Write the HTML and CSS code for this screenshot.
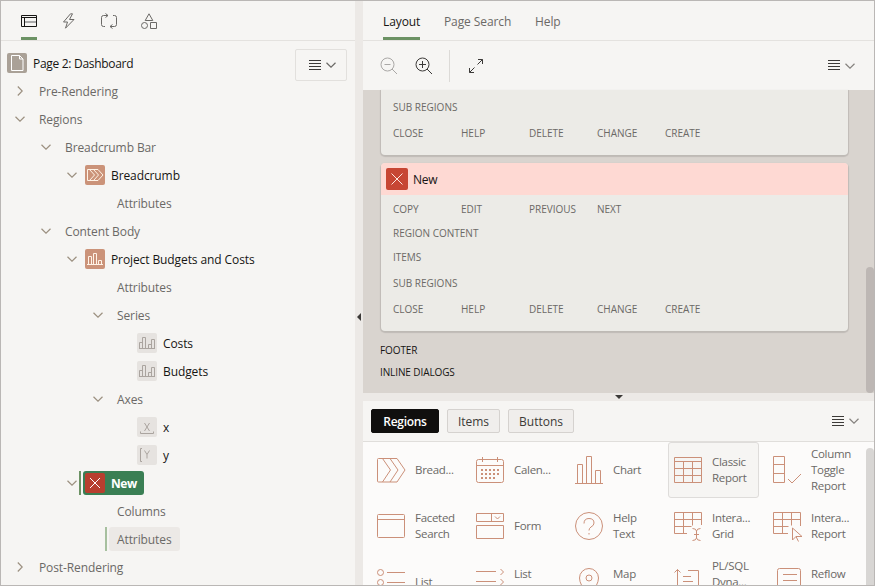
FILE: index.html
```
<!DOCTYPE html>
<html lang="en">

<head>
  <meta charset="UTF-8" />
  <meta name="viewport" content="width=device-width, initial-scale=1" />
  <title>Page Designer</title>
  <link rel="stylesheet" href="styles.css">
</head>

<body>
  <!-- shared icons -->
  <svg class="sprite" width="0" height="0">
    <symbol id="down" viewBox="0 0 10 6"><path d="M.5 .8 5 5.2 9.5 .8" /></symbol>
    <symbol id="right" viewBox="0 0 6 10"><path d="M.8 .5 5.2 5 .8 9.5" /></symbol>
    <symbol id="lines" viewBox="0 0 12 11"><path d="M0 .5h12M0 3.5h12M0 6.5h12M0 9.5h12" /></symbol>
    <symbol id="cross" viewBox="0 0 20 20"><path d="M5 5l10 10M15 5 5 15" /></symbol>
    <symbol id="series" viewBox="0 0 20 20"><path d="M2.5 15.500v-6h3M5.500 15.500v-11h3v11M11.500 15.500v-4h3M14.500 15.500v-9h3v9M2 15.500h16" /></symbol>
  </svg>

  <div class="designer">
    <div class="left">
      <div class="icon-tabs">
        <span class="icon-tab active"><svg width="16" height="12" viewBox="0 0 16 12"><path d="M.5 .5h15v11H.5zM.5 2.500h15M3.500 2.500v9" /><path class="dim" d="M4 7h11" /></svg></span>
        <span class="icon-tab"><svg width="14" height="16" viewBox="0 0 14 16"><path d="M8.500.8 1.500 9h4L3.500 15.200 12 6.500H7.500L10.500.8z" /></svg></span>
        <span class="icon-tab"><svg width="18" height="16" viewBox="0 0 18 16"><path d="M5 13.500H3.500q-2 0-2-2v-7q0-2 2-2H8M5.500 .5l2.500 2-2.500 2M13 2.500h1.500q2 0 2 2v7q0 2-2 2H10M12.500 11.500l-2.500 2 2.500 2" /></svg></span>
        <span class="icon-tab"><svg width="16" height="16" viewBox="0 0 16 16"><path d="M8 .8 11.800 7.500H4.200zM9.500 9.500h6v6h-6z" /><circle cx="3.500" cy="12.500" r="3" /></svg></span>
      </div>
      <div class="tree-area">
        <ul class="tree">
          <li class="root"><svg class="node-icon page" viewBox="0 0 20 20"><path d="M4.500 2.500h8l3.500 3.500v11.500H4.500zM12.500 2.500V6H16" /></svg><span class="strong">Page 2: Dashboard</span></li>
          <li class="l1"><i><svg class="side"><use href="#right" /></svg></i><span class="label">Pre-Rendering</span></li>
          <li class="l1"><i><svg><use href="#down" /></svg></i><span class="label">Regions</span></li>
          <li class="l2"><i><svg><use href="#down" /></svg></i><span class="label">Breadcrumb Bar</span></li>
          <li class="l3"><i><svg><use href="#down" /></svg></i><svg class="node-icon region" viewBox="0 0 20 20"><path d="M2.500 4.500h10.500l5 5.500-5 5.500H2.500zM4.500 4.500l5 5.500-5 5.500M8.500 4.500l5 5.500-5 5.500" /></svg><span class="strong">Breadcrumb</span></li>
          <li class="l4"><i></i><span class="label">Attributes</span></li>
          <li class="l2"><i><svg><use href="#down" /></svg></i><span class="label">Content Body</span></li>
          <li class="l3"><i><svg><use href="#down" /></svg></i><svg class="node-icon region" viewBox="0 0 20 20"><path d="M3.500 15.500v-8h3v8M8.500 15.500v-11h3v11M13.500 15.500v-4h3v4M2 15.500h16" /></svg><span class="strong">Project Budgets and Costs</span></li>
          <li class="l4"><i></i><span class="label">Attributes</span></li>
          <li class="l4"><i><svg><use href="#down" /></svg></i><span class="label">Series</span></li>
          <li class="l5"><i></i><svg class="node-icon leaf"><use href="#series" /></svg><span class="strong">Costs</span></li>
          <li class="l5"><i></i><svg class="node-icon leaf"><use href="#series" /></svg><span class="strong">Budgets</span></li>
          <li class="l4"><i><svg><use href="#down" /></svg></i><span class="label">Axes</span></li>
          <li class="l5"><i></i><svg class="node-icon leaf" viewBox="0 0 20 20"><path d="M7.500 6l5 8M12.500 6l-5 8M3.500 14.500v2h13v-2" /></svg><span class="strong">x</span></li>
          <li class="l5"><i></i><svg class="node-icon leaf" viewBox="0 0 20 20"><path d="M7.500 5.500 10 9.500l2.500-4M10 9.500v4M5 3.500H3.500v13H5" /></svg><span class="strong">y</span></li>
          <li class="l3"><i><svg><use href="#down" /></svg></i><span class="selected"><svg class="node-icon error"><use href="#cross" /></svg>New</span></li>
          <li class="l4"><i></i><span class="label">Columns</span></li>
          <li class="l4"><i></i><span class="related">Attributes</span></li>
          <li class="l1"><i><svg class="side"><use href="#right" /></svg></i><span class="label">Post-Rendering</span></li>
        </ul>
        <button class="menu boxed"><svg class="lines"><use href="#lines" /></svg><svg class="arrow"><use href="#down" /></svg></button>
      </div>
    </div>

    <div class="splitter vertical"><span></span></div>

    <div class="right">
      <div class="tabs">
        <a class="tab active t-layout">Layout</a>
        <a class="tab t-search">Page Search</a>
        <a class="tab">Help</a>
      </div>
      <div class="toolbar">
        <svg class="zoom-out" width="18" height="18" viewBox="0 0 18 18"><circle cx="7.500" cy="7.500" r="6.500" /><path d="M4.500 7.500h6M12 12l5 5" /></svg>
        <svg class="zoom-in" width="18" height="18" viewBox="0 0 18 18"><circle cx="7.500" cy="7.500" r="6.500" /><path d="M4 7.500h7M7.500 4v7M12 12l5 5" /></svg>
        <span class="divider"></span>
        <svg class="expand" width="14" height="14" viewBox="0 0 14 14"><path d="M9 .5h4.500V5M13.500.5l-5 5M5 13.500H.5V9M.5 13.500l5-5" /></svg>
        <button class="menu"><svg class="lines"><use href="#lines" /></svg><svg class="arrow"><use href="#down" /></svg></button>
      </div>

      <div class="canvas">
        <div class="card cut">
          <div class="slot sub">Sub Regions</div>
          <div class="slots"><span>Close</span><span>Help</span><span>Delete</span><span>Change</span><span>Create</span></div>
        </div>
        <div class="card">
          <div class="card-head"><svg class="card-icon" viewBox="0 0 22 22"><path d="M5.500 5.500l11 11M16.500 5.500l-11 11" /></svg>New</div>
          <div class="slots first"><span>Copy</span><span>Edit</span><span>Previous</span><span>Next</span></div>
          <div class="slot">Region Content</div>
          <div class="slot">Items</div>
          <div class="slot sub">Sub Regions</div>
          <div class="slots"><span>Close</span><span>Help</span><span>Delete</span><span>Change</span><span>Create</span></div>
        </div>
        <div class="position">Footer</div>
        <div class="position">Inline Dialogs</div>
        <div class="thumb"></div>
      </div>

      <div class="splitter horizontal"><span></span></div>

      <div class="gallery-bar">
        <button class="pill on">Regions</button>
        <button class="pill items">Items</button>
        <button class="pill buttons">Buttons</button>
        <button class="menu"><svg class="lines"><use href="#lines" /></svg><svg class="arrow"><use href="#down" /></svg></button>
      </div>

      <div class="gallery">
        <div class="cell"><svg viewBox="0 0 28 28"><path d="M1.500 2.500H20l8 11.500-8 12H1.500q-1 0-1-1V3.500q0-1 1-1zM5.500 2.500 13.500 14l-8 12M13 2.500 21 14l-8 12" /></svg><span>Bread...</span></div>
        <div class="cell"><svg viewBox="0 0 28 28"><path d="M2.500 3.500h23q2 0 2 2v19q0 2-2 2h-23q-2 0-2-2v-19q0-2 2-2zM.5 9.500h27M6.500 1v5M21.500 1v5" /><path class="dots" d="M5 14h18M5 18h18M5 22h15" /></svg><span>Calen...</span></div>
        <div class="cell"><svg viewBox="0 0 28 28"><path d="M2.500 27.500v-19h5v19M11.500 27.500v-27h5v27M20.500 27.500v-13h5v13M0 27.500h28" /></svg><span>Chart</span></div>
        <div class="cell picked"><svg viewBox="0 0 28 28"><path d="M.5 1.500h27v25H.5zM.5 5.500h27M.5 12.500h27M.5 19.500h27M9.500 5.500v21M18.500 5.500v21" /></svg><span>Classic<br>Report</span></div>
        <div class="cell"><svg viewBox="0 0 28 28"><path d="M.5 .5h11v26H.5zM.5 8.500h11M.5 17.500h11M15 23l4 4 9-9" /></svg><span>Column<br>Toggle<br>Report</span></div>

        <div class="cell"><svg viewBox="0 0 28 28"><path d="M1.500 2.500h25q1 0 1 1v21q0 1-1 1h-25q-1 0-1-1v-21q0-1 1-1zM.5 7.500h27" /></svg><span>Faceted<br>Search</span></div>
        <div class="cell"><svg viewBox="0 0 28 28"><path d="M.5 1.500h27v8H.5zM15.500 1.500v8M19 4.500l2.500 2.500 2.500-2.500M.5 13.500h27v13H.5z" /></svg><span>Form</span></div>
        <div class="cell"><svg viewBox="0 0 28 28"><circle cx="14" cy="14" r="13.500" /><path d="M9 11.500q0-5 5-5t5 4.500q0 2.500-3 4-2 1.200-2 3.500M14 21v1.500" /></svg><span>Help<br>Text</span></div>
        <div class="cell"><svg viewBox="0 0 28 28"><path d="M13 21.500H.5V.5h27V13M.5 7.500h27M.5 14.500h17M9.500 .5v21M18.500 .5v13" /><path d="M18.500 16.500q3.500 0 4 2.500.5-2.500 4-2.500M22.500 19v7M18.500 28.500q3.500 0 4-2.500.5 2.500 4 2.500M20 22.500h5" /></svg><span>Intera...<br>Grid</span></div>
        <div class="cell"><svg viewBox="0 0 28 28"><path d="M15 21.500H.5V.5h27V14M.5 7.500h27M.5 14.500h15M9.500 .5v21M18.500 .5v13M19.500 16v12l3.500-3.500h6zM23 24.500l2.500 5" /></svg><span>Intera...<br>Report</span></div>

        <div class="cell"><svg viewBox="0 0 28 28"><circle cx="3.500" cy="4.500" r="3" /><circle cx="3.500" cy="14.500" r="3" /><circle cx="3.500" cy="24.500" r="3" /><path d="M10 4.500h18M10 14.500h18M10 24.500h18" /></svg><span>List</span></div>
        <div class="cell"><svg viewBox="0 0 28 28"><path d="M0 3.500h20M0 13.500h20M0 23.500h20M24.500 1l3 3-3 3M24.500 11l3 3-3 3M24.500 21l3 3-3 3" /></svg><span>List<br>View</span></div>
        <div class="cell"><svg viewBox="0 0 28 28"><path d="M14 28Q4.500 17 4.500 10a9.500 9.500 0 0 1 19 0Q23.500 17 14 28z" /><circle cx="14" cy="10" r="3" /></svg><span>Map<br>Region</span></div>
        <div class="cell"><svg viewBox="0 0 28 28"><path d="M3.500 28V1.500M.5 4.500l3-3 3 3M14 2.500h10.500V28M9 8.500h8M9 13.500h10M7.500 19V28" /></svg><span>PL/SQL<br>Dyna...<br>Content</span></div>
        <div class="cell"><svg viewBox="0 0 28 28"><path d="M4.500 28V2.500q0-2 2-2h19q2 0 2 2V28M10 6.500h14M10 12.500h14M10 18.500h14" /></svg><span>Reflow<br>Report</span></div>
        <div class="thumb"></div>
      </div>
    </div>
  </div>
</body>

</html>
```
FILE: styles.css
```
* {
  margin: 0;
  padding: 0;
  box-sizing: border-box;
}

body {
  font-family: "Open Sans", "Noto Sans", sans-serif;
  font-size: 12px;
  letter-spacing: -0.1px;
  color: #6b6966;
  height: 586px;
  overflow: hidden;
}

svg {
  fill: none;
  stroke: currentColor;
  stroke-width: 1;
  flex: none;
}

button {
  font: inherit;
  color: inherit;
  border: none;
  background: none;
}

.sprite {
  display: block;
}

.designer {
  display: flex;
  height: 586px;
  border: 1px solid #bab7b5;
  background: #f6f5f3;
}

/* left pane */
.left {
  width: 354px;
}

.icon-tabs {
  display: flex;
  height: 40px;
  padding-left: 8px;
  border-bottom: 1px solid #e4e2df;
}

.icon-tab {
  width: 40px;
  display: flex;
  align-items: center;
  justify-content: center;
}

.icon-tab.active {
  width: 16px;
  margin: 0 12px;
  color: #161513;
  border-bottom: 3px solid #6c9264;
  padding-top: 3px;
}

.dim {
  stroke: #aaa;
  stroke-width: 2;
}

.tree-area {
  display: flex;
  padding: 8px 8px 0 6px;
}

.tree {
  flex: 1;
  list-style: none;
}

.tree li {
  display: flex;
  align-items: center;
  height: 28px;
  white-space: nowrap;
}

.l2 { padding-left: 26px; }
.l3 { padding-left: 52px; }
.l4 { padding-left: 78px; }
.l5 { padding-left: 104px; }

.tree i {
  width: 26px;
  display: flex;
  justify-content: center;
  color: #9c9080;
}

.tree i svg {
  width: 10px;
  height: 6px;
  stroke-width: 1.2;
}

.tree i svg.side {
  width: 6px;
  height: 10px;
}

.label {
  padding-left: 6px;
}

.strong {
  padding-left: 6px;
  color: #161513;
}

.root .strong {
  letter-spacing: -0.3px;
}

.node-icon {
  width: 20px;
  height: 20px;
  border-radius: 2px;
}

.page {
  background: #aaa197;
  color: #fff;
}

.region {
  background: #cb9379;
  color: #fff3e6;
}

.leaf {
  background: #e6e3e0;
  color: #aaa49f;
}

.error {
  background: #b83f2f;
  color: #fff;
  margin-right: 6px;
}

.selected,
.related {
  position: relative;
  display: flex;
  align-items: center;
  height: 24px;
  margin-left: -2px;
  border-radius: 3px;
}

.selected {
  padding: 0 8px 0 2px;
  width: 61px;
  background: #3a7f54;
  color: #fff;
  font-weight: bold;
  letter-spacing: -0.4px;
}

.related {
  padding-left: 8px;
  width: 71px;
  background: #ece9e6;
}

.selected::before,
.related::before {
  content: "";
  position: absolute;
  left: -4px;
  top: 0;
  width: 2px;
  height: 24px;
  background: #6c9264;
}

.related::before {
  background: #a7c09f;
}

.menu {
  display: flex;
  align-items: center;
  gap: 5px;
}

.menu.boxed {
  width: 52px;
  height: 32px;
  padding-left: 13px;
  border: 1px solid #e2e0dd;
  border-radius: 2px;
}

.lines {
  width: 12px;
  height: 11px;
  color: #3c3a38;
}

.arrow {
  width: 10px;
  height: 6px;
  stroke-width: 1.2;
}

/* splitters */
.splitter {
  display: flex;
  align-items: center;
  justify-content: center;
  background: #ece9e6;
}

.vertical {
  width: 8px;
  padding-top: 47px;
}

.vertical span {
  border: 4px solid transparent;
  border-right-color: #3c3a38;
  border-left: none;
}

.horizontal {
  height: 8px;
}

.horizontal span {
  border: 4px solid transparent;
  border-top-color: #3c3a38;
  border-bottom: none;
}

/* right pane */
.right {
  width: 511px;
}

.tabs {
  display: flex;
  height: 40px;
  padding-left: 20px;
  gap: 24px;
  border-bottom: 1px solid #e4e2df;
}

.tab {
  line-height: 41px;
  white-space: nowrap;
}

.tab.active {
  color: #161513;
  border-bottom: 3px solid #6c9264;
}

.t-layout { width: 37px; }
.t-search { width: 67px; }

.toolbar {
  display: flex;
  align-items: center;
  height: 49px;
  padding: 0 19px 0 17px;
  color: #3c3a38;
}

.zoom-out {
  color: #aaa8a6;
}

.zoom-in {
  margin-left: 17px;
}

.divider {
  width: 1px;
  height: 32px;
  margin: 0 19px 0 16px;
  background: #dcdad7;
}

.toolbar .menu,
.gallery-bar .menu {
  margin-left: auto;
  color: #85827e;
}

.canvas {
  position: relative;
  height: 303px;
  padding: 0 26px 0 18px;
  background: #d9d4cf;
}

.card {
  height: 168px;
  margin-bottom: 8px;
  border-radius: 4px;
  background: #ecebe7;
  box-shadow: 0 1px 1px 1px rgba(0, 0, 0, 0.12);
  overflow: hidden;
  font-size: 10px;
  letter-spacing: 0;
  text-transform: uppercase;
}

.cut {
  height: 65px;
  padding-top: 4px;
  border-radius: 0 0 4px 4px;
}

.card-head {
  display: flex;
  align-items: center;
  height: 32px;
  padding-left: 5px;
  gap: 5px;
  background: #fed9d3;
  color: #161513;
  font-size: 12px;
  letter-spacing: -0.3px;
  text-transform: none;
}

.card-icon {
  width: 22px;
  height: 22px;
  border-radius: 2px;
  background: #c74634;
  color: #fde5e0;
}

.slot,
.slots {
  height: 24px;
  line-height: 22px;
  padding-left: 12px;
}

.slot.sub {
  height: 26px;
  line-height: 26px;
}

.slots {
  display: grid;
  grid-template-columns: repeat(5, 68px);
  line-height: 26px;
}

.slots.first {
  height: 27px;
  line-height: 29px;
}

.position {
  height: 22px;
  line-height: 22px;
  margin-left: -1px;
  color: #161513;
  font-size: 10px;
  text-transform: uppercase;
}

.thumb {
  position: absolute;
  right: 0;
  bottom: 0;
  width: 8px;
  height: 126px;
  border-radius: 4px;
  background: #bdb7b4;
}

/* gallery */
.gallery-bar {
  display: flex;
  align-items: center;
  height: 41px;
  padding: 0 15px 0 8px;
  gap: 8px;
  border-bottom: 1px solid #e0dedb;
}

.pill {
  width: 68px;
  height: 24px;
  border: 1px solid #d5d2cf;
  border-radius: 2px;
  background: #f0eeec;
  color: #3c3a38;
}

.pill.on {
  border-color: #100f0e;
  background: #100f0e;
  color: #fff;
  font-weight: 600;
  letter-spacing: -0.3px;
}

.items { width: 53px; }
.buttons { width: 66px; }

.gallery {
  position: relative;
  display: grid;
  grid-template-columns: repeat(5, 91px);
  grid-auto-rows: 56px;
  column-gap: 8px;
  height: 143px;
  padding-left: 8px;
  background: #fcfbfa;
  overflow: hidden;
}

.cell {
  display: flex;
  align-items: center;
  padding-left: 5px;
  gap: 10px;
  border: 1px solid transparent;
  border-radius: 3px;
  line-height: 16px;
  font-size: 11.5px;
  letter-spacing: -0.3px;
  white-space: nowrap;
}

.cell svg {
  width: 28px;
  height: 28px;
  color: #cb9079;
  overflow: visible;
}

.dots {
  stroke-width: 2;
  stroke-dasharray: 2 2;
}

.picked {
  border-color: #dedcda;
  background: #f6f5f3;
}

.gallery .thumb {
  top: 6px;
  height: 150px;
  background: #d8d6d4;
}
```
